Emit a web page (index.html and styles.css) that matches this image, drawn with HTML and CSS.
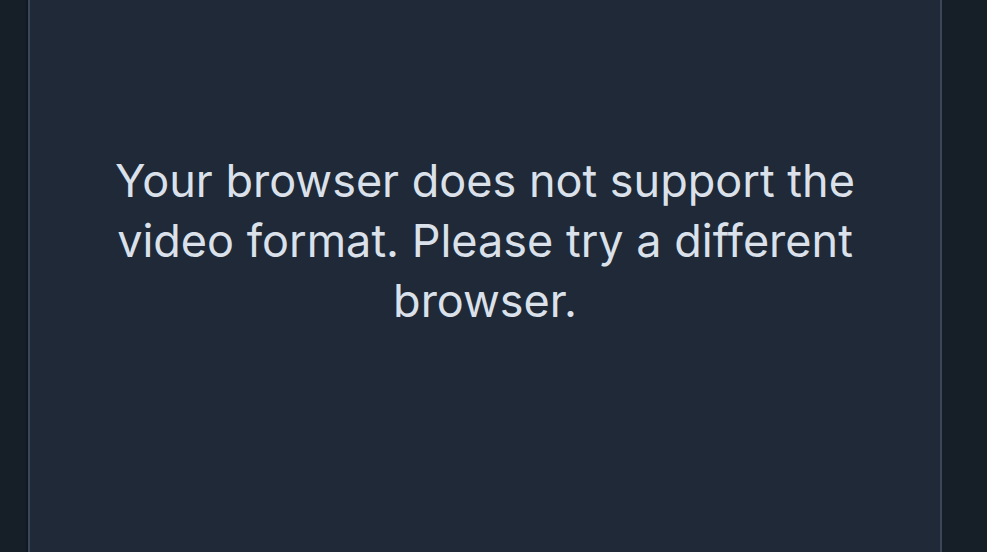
FILE: index.html
```html
<!DOCTYPE html>
<html>
    <head>
        <title>video</title>
        <link rel="stylesheet" href="styles.css">
    </head>
    <body>
        <div class="page">
            <div class="player">
                <p class="fallback">Your browser does not support the video format. Please try a different browser.</p>
            </div>
        </div>
    </body>
</html>
```

FILE: styles.css
```css
html,body {
    margin:0;
    height:100%;
    background-color: #161e28;
}
.page {
    display: flex;
    height: 100%;
    padding: 0 45px 0 28px;
    box-sizing: border-box;
}
/* video box */
.player {
    flex: 1;
    background-color: #1f2937;
    border-left: 2px solid #3a4659;
    border-right: 2px solid #3a4659;
    box-shadow: -2px 0 0 #121821;
    display: flex;
    justify-content: center;
    padding: 151px 60px 0 60px;
}
.fallback {
    margin: 0;
    font-family: Inter, "Noto Sans", sans-serif;
    font-size: 45px;
    line-height: 60px;
    color: #dbe1ea;
    text-align: center;
    max-width: 780px;
}
```
